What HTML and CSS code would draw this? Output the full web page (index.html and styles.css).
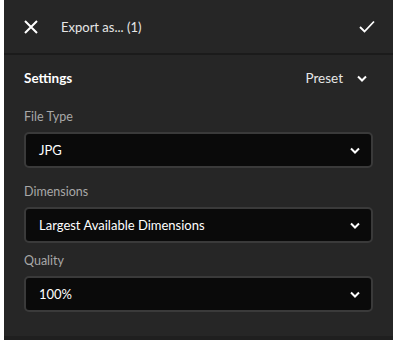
FILE: index.html
```html
<!DOCTYPE html>
<html lang="en">
<head>
  <meta charset="UTF-8" />
  <title>Export as</title>
  <link rel="stylesheet" href="styles.css">
</head>
<body>

<div class="panel">
  <div class="header">
    <svg class="icon-close" width="14" height="14" viewBox="0 0 14 14">
      <path d="M1 1 L13 13 M13 1 L1 13" stroke="#fff" stroke-width="2" fill="none" />
    </svg>
    <span class="title">Export as... (1)</span>
    <svg class="icon-check" width="16" height="13" viewBox="0 0 16 13">
      <path d="M1 7 L5.5 11.5 L15 1.5" stroke="#fff" stroke-width="1.8" fill="none" />
    </svg>
  </div>

  <div class="content">
    <div class="settings-row">
      <span class="settings-title">Settings</span>
      <span class="preset">Preset
        <svg class="chevron" width="10" height="7" viewBox="0 0 10 7">
          <path d="M1 1.5 L5 5.5 L9 1.5" stroke="#fff" stroke-width="2" fill="none" />
        </svg>
      </span>
    </div>

    <div class="field">
      <div class="label">File Type</div>
      <div class="select">
        <span>JPG</span>
        <svg class="chevron" width="10" height="7" viewBox="0 0 10 7">
          <path d="M1 1.5 L5 5.5 L9 1.5" stroke="#fff" stroke-width="2" fill="none" />
        </svg>
      </div>
    </div>

    <div class="field field-dim">
      <div class="label">Dimensions</div>
      <div class="select">
        <span>Largest Available Dimensions</span>
        <svg class="chevron" width="10" height="7" viewBox="0 0 10 7">
          <path d="M1 1.5 L5 5.5 L9 1.5" stroke="#fff" stroke-width="2" fill="none" />
        </svg>
      </div>
    </div>

    <div class="field field-quality">
      <div class="label">Quality</div>
      <div class="select">
        <span>100%</span>
        <svg class="chevron" width="10" height="7" viewBox="0 0 10 7">
          <path d="M1 1.5 L5 5.5 L9 1.5" stroke="#fff" stroke-width="2" fill="none" />
        </svg>
      </div>
    </div>
  </div>
</div>

</body>
</html>
```

FILE: styles.css
```css
* { box-sizing: border-box; }
body {
  margin: 0;
  background: #fff;
  font-family: Lato, 'Open Sans', sans-serif;
  color: #fff;
}

.panel {
  margin-left: 4px;
  width: 389px;
  height: 340px;
  background: #262626;
  border-bottom: 4px solid #1f1f1f;
}

.header {
  height: 55px;
  display: flex;
  align-items: center;
  padding: 0 18px 0 20px;
  border-bottom: 2px solid #1b1b1b;
}

.title {
  margin-left: 23px;
  font-size: 13px;
  color: #e6e6e6;
  flex: 1;
}

.content {
  padding: 0 20px;
}

.settings-row {
  height: 46px;
  display: flex;
  align-items: center;
  justify-content: space-between;
}

.settings-title {
  font-size: 13.5px;
  font-weight: bold;
}

.preset {
  font-size: 13.5px;
  color: #e6e6e6;
  display: flex;
  align-items: center;
  gap: 14px;
  margin-right: 6px;
}

.label {
  font-size: 12.5px;
  color: #a8a8a8;
  line-height: 16px;
  margin-bottom: 7px;
}

.field {
  margin-top: 8px;
}

.field-dim {
  margin-top: 16px;
}

.field-quality {
  margin-top: 10px;
}

.select {
  height: 36px;
  background: #0a0a0a;
  border: 2px solid #3a3a3a;
  border-radius: 5px;
  display: flex;
  align-items: center;
  justify-content: space-between;
  padding: 0 11px 0 13px;
  font-size: 13px;
}
```
